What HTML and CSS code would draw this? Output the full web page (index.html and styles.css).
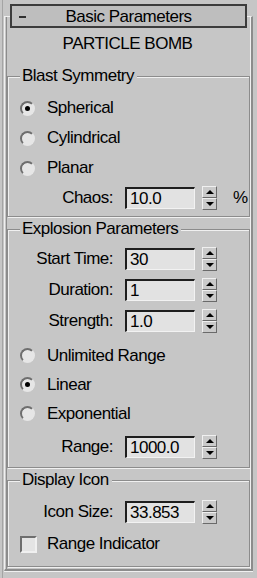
FILE: index.html
```html
<!DOCTYPE html>
<html lang="en">
<head>
    <meta charset="UTF-8">
    <meta name="viewport" content="width=device-width, initial-scale=1.0">
    <title>Particle Bomb - Basic Parameters</title>
    <link rel="stylesheet" href="styles.css">
</head>
<body>
    <div class="rollout">
        <!-- Cabeçalho do rollout -->
        <div class="rollout-head">
            <span class="collapse"></span>
            <span class="head-title">Basic Parameters</span>
        </div>

        <div class="rollout-body">
            <div class="title">PARTICLE BOMB</div>

            <!-- Blast Symmetry -->
            <fieldset class="group group-blast">
                <legend>Blast Symmetry</legend>
                <div class="radio-row first"><span class="radio checked"></span>Spherical</div>
                <div class="radio-row"><span class="radio"></span>Cylindrical</div>
                <div class="radio-row"><span class="radio"></span>Planar</div>
                <div class="spin-row chaos">
                    <span class="spin-label">Chaos:</span>
                    <span class="field">10.0</span>
                    <span class="spinner"><span class="up"></span><span class="down"></span></span>
                    <span class="unit">%</span>
                </div>
            </fieldset>

            <!-- Explosion Parameters -->
            <fieldset class="group group-explosion">
                <legend>Explosion Parameters</legend>
                <div class="spin-row">
                    <span class="spin-label">Start Time:</span>
                    <span class="field">30</span>
                    <span class="spinner"><span class="up"></span><span class="down"></span></span>
                </div>
                <div class="spin-row next">
                    <span class="spin-label">Duration:</span>
                    <span class="field">1</span>
                    <span class="spinner"><span class="up"></span><span class="down"></span></span>
                </div>
                <div class="spin-row next">
                    <span class="spin-label">Strength:</span>
                    <span class="field">1.0</span>
                    <span class="spinner"><span class="up"></span><span class="down"></span></span>
                </div>
                <div class="radio-row small first"><span class="radio"></span>Unlimited Range</div>
                <div class="radio-row small"><span class="radio checked"></span>Linear</div>
                <div class="radio-row small"><span class="radio"></span>Exponential</div>
                <div class="spin-row range">
                    <span class="spin-label">Range:</span>
                    <span class="field">1000.0</span>
                    <span class="spinner"><span class="up"></span><span class="down"></span></span>
                </div>
            </fieldset>

            <!-- Display Icon -->
            <fieldset class="group group-display">
                <legend>Display Icon</legend>
                <div class="spin-row">
                    <span class="spin-label">Icon Size:</span>
                    <span class="field">33.853</span>
                    <span class="spinner"><span class="up"></span><span class="down"></span></span>
                </div>
                <div class="check-row"><span class="checkbox"></span>Range Indicator</div>
            </fieldset>
        </div>
    </div>
</body>
</html>
```

FILE: styles.css
```css
/* Estilos Gerais */
body {
    font-family: "Liberation Sans", Arial, sans-serif;
    font-size: 17px;
    letter-spacing: -0.5px;
    background-color: #c6c6c6;
    color: #000;
    margin: 0;
    padding: 0;
}

.rollout {
    width: 257px;
    padding-top: 4px;
    box-sizing: border-box;
    box-shadow: inset 2px 0 0 #c6c6c6, inset 3px 0 0 #a4a4a4;
    min-height: 578px;
}

/* Cabeçalho */
.rollout-head {
    position: relative;
    z-index: 1;
    margin: 0 10px;
    height: 24px;
    box-sizing: border-box;
    border: 2px solid #3c3c3c;
    background-color: #bebebe;
    display: grid;
    grid-template-columns: 1fr auto 1fr;
    align-items: center;
    line-height: 20px;
}

.collapse {
    width: 7px;
    height: 2px;
    margin-left: 7px;
    background-color: #303030;
}

.head-title {
    padding-top: 1px;
}

/* Corpo com moldura */
.rollout-body {
    margin: -12px 4px 0;
    padding: 17px 0 2px 2px;
    border-top: 1px solid #f0f0f0;
    border-left: 1px solid #f0f0f0;
    border-right: 2px solid #8c8c8c;
    border-bottom: 2px solid #8c8c8c;
    box-shadow: inset 1px 0 0 #c6c6c6, inset 2px 0 0 #8c8c8c, inset -1px 0 0 #f0f0f0, 0 1px 0 #f0f0f0;
}

.title {
    height: 20px;
    line-height: 20px;
    text-align: center;
    padding-right: 3px;
}

/* Grupos */
.group {
    margin: 0 1px 0 0;
    padding: 0;
    min-inline-size: 0;
    border: 1px solid #8c8c8c;
    box-shadow: inset 1px 1px 0 #f0f0f0, 1px 1px 0 #f0f0f0;
}

.group legend {
    margin-left: 12px;
    padding: 0 3px 0 2px;
    line-height: 16px;
    background-color: #c6c6c6;
}

.group-blast {
    margin-top: 14px;
    padding: 9px 0 7px;
}

.group-explosion {
    margin-top: 4px;
    padding: 11px 0 9px;
}

.group-display {
    margin-top: 4px;
    padding: 13px 0 11px;
}

/* Botões de opção */
.radio-row {
    height: 30px;
    display: flex;
    align-items: center;
}

.radio-row.small {
    height: 29px;
}

.group-explosion .radio-row.first {
    margin-top: 9px;
}

.radio {
    width: 15px;
    height: 15px;
    box-sizing: border-box;
    margin: 0 12px 0 12px;
    border-radius: 50%;
    border: 2px solid;
    border-color: #6e6e6e #e6e6e6 #e6e6e6 #6e6e6e;
    background-color: #e6e6e6;
    display: flex;
    align-items: center;
    justify-content: center;
}

.radio.checked::after {
    content: "";
    width: 5px;
    height: 5px;
    border-radius: 50%;
    background-color: #000;
}

/* Campos numéricos */
.spin-row {
    height: 22px;
    display: flex;
    align-items: center;
}

.spin-row.chaos {
    margin-top: 4px;
}

.spin-row.next {
    margin-top: 9px;
}

.spin-row.range {
    margin-top: 8px;
}

.spin-label {
    width: 105px;
    margin-right: 12px;
    text-align: right;
}

.field {
    width: 70px;
    height: 22px;
    box-sizing: border-box;
    padding-left: 3px;
    line-height: 19px;
    border-top: 2px solid #1e1e1e;
    border-left: 2px solid #1e1e1e;
    border-right: 1px solid #f2f2f2;
    border-bottom: 1px solid #f2f2f2;
    background-color: #e2e2e2;
}

.spinner {
    width: 15px;
    height: 24px;
    margin-left: 7px;
    display: flex;
    flex-direction: column;
}

.spinner span {
    flex: 1;
    box-sizing: border-box;
    border: 1px solid;
    border-color: #f0f0f0 #6a6a6a #6a6a6a #f0f0f0;
    background-color: #cacaca;
    display: flex;
    align-items: center;
    justify-content: center;
}

.spinner .up::after {
    content: "";
    border-left: 4px solid transparent;
    border-right: 4px solid transparent;
    border-bottom: 4px solid #000;
}

.spinner .down::after {
    content: "";
    border-left: 4px solid transparent;
    border-right: 4px solid transparent;
    border-top: 4px solid #000;
}

.unit {
    margin-left: 16px;
}

/* Caixa de seleção */
.check-row {
    height: 22px;
    margin-top: 10px;
    display: flex;
    align-items: center;
}

.checkbox {
    width: 17px;
    height: 17px;
    box-sizing: border-box;
    margin: 0 10px 0 12px;
    border: 2px solid;
    border-color: #6e6e6e #f0f0f0 #f0f0f0 #6e6e6e;
    background-color: #e4e4e4;
}
```
